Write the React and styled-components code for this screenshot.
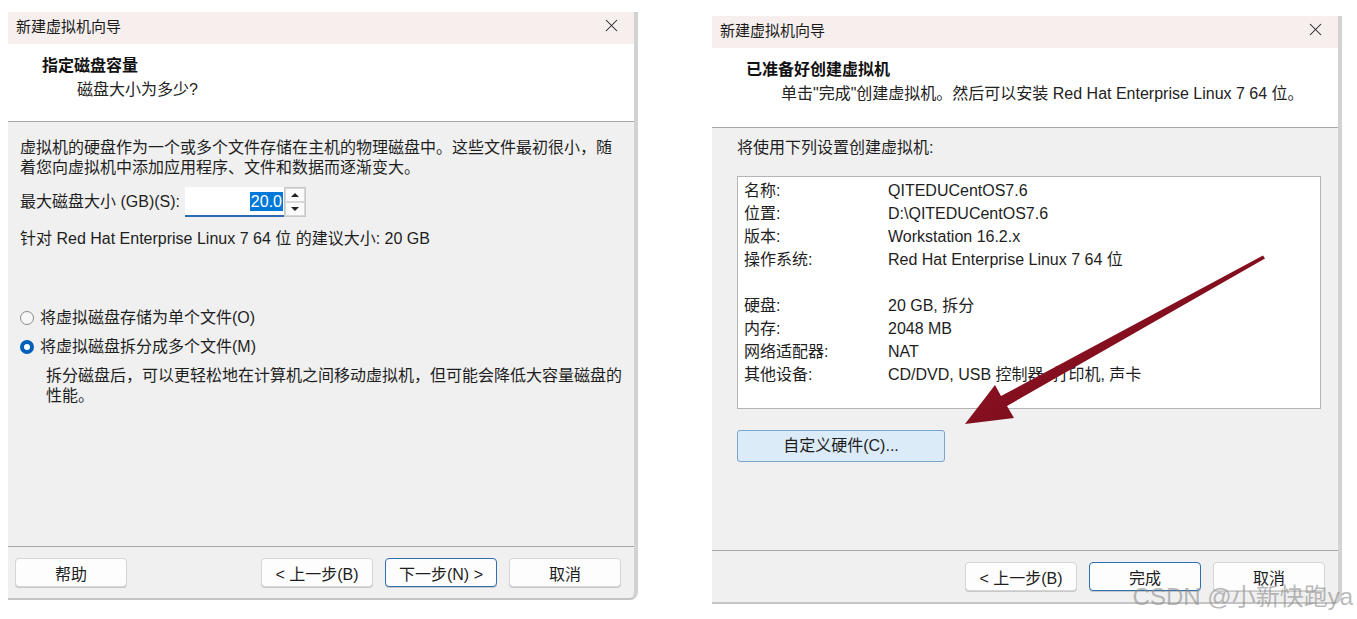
import React from "react";
import styled, { createGlobalStyle } from "styled-components";
import { X } from "lucide-react";

const GlobalStyle = createGlobalStyle`
  body {
    margin: 0;
    background: #ffffff;
    font-family: "Liberation Sans", "Noto Sans CJK SC", sans-serif;
  }
`;

export default function App() {
  return (
    <Page>
      <GlobalStyle />
      <Dialog>
        <TitleBar>
          <TitleText>新建虚拟机向导</TitleText>
          <X size={21} strokeWidth={1.2} color="#222" />
        </TitleBar>
        <Header $height={78}>
          <HeaderTitle>指定磁盘容量</HeaderTitle>
          <HeaderSub>磁盘大小为多少?</HeaderSub>
        </Header>
        <Body $top={16} $left={12} $right={12}>
          <Paragraph>
            虚拟机的硬盘作为一个或多个文件存储在主机的物理磁盘中。这些文件最初很小，随着您向虚拟机中添加应用程序、文件和数据而逐渐变大。
          </Paragraph>
          <SizeRow>
            <span>最大磁盘大小 (GB)(S):</span>
            <SizeInput>
              <Selected>20.0</Selected>
            </SizeInput>
            <Spinner>
              <SpinButton>
                <Tri $up />
              </SpinButton>
              <SpinButton>
                <Tri />
              </SpinButton>
            </Spinner>
          </SizeRow>
          <Paragraph $mt={12}>
            针对 Red Hat Enterprise Linux 7 64 位 的建议大小: 20 GB
          </Paragraph>
          <RadioRow $mt={59}>
            <Radio />
            将虚拟磁盘存储为单个文件(O)
          </RadioRow>
          <RadioRow $mt={9}>
            <Radio $checked />
            将虚拟磁盘拆分成多个文件(M)
          </RadioRow>
          <Paragraph $mt={9} $indent={26}>
            拆分磁盘后，可以更轻松地在计算机之间移动虚拟机，但可能会降低大容量磁盘的性能。
          </Paragraph>
        </Body>
        <Footer>
          <Button>帮助</Button>
          <ButtonGroup>
            <Button>&lt; 上一步(B)</Button>
            <Button $primary>下一步(N) &gt;</Button>
            <Button>取消</Button>
          </ButtonGroup>
        </Footer>
      </Dialog>

      <Dialog $offset={4}>
        <TitleBar>
          <TitleText>新建虚拟机向导</TitleText>
          <X size={21} strokeWidth={1.2} color="#222" />
        </TitleBar>
        <Header $height={80}>
          <HeaderTitle>已准备好创建虚拟机</HeaderTitle>
          <HeaderSub>
            单击"完成"创建虚拟机。然后可以安装 Red Hat Enterprise Linux 7 64 位。
          </HeaderSub>
        </Header>
        <Body $top={10} $left={25} $right={17}>
          <Paragraph>将使用下列设置创建虚拟机:</Paragraph>
          <SummaryBox>
            {summary.map((row, i) => (
              <SummaryRow key={i}>
                <span>{row[0]}</span>
                <span>{row[1]}</span>
              </SummaryRow>
            ))}
          </SummaryBox>
          <CustomButton>自定义硬件(C)...</CustomButton>
        </Body>
        <Footer>
          <span />
          <ButtonGroup>
            <Button>&lt; 上一步(B)</Button>
            <Button $primary>完成</Button>
            <Button>取消</Button>
          </ButtonGroup>
        </Footer>
      </Dialog>

      <Arrow viewBox="0 0 1357 619" width="1357" height="619">
        <defs>
          <linearGradient id="arrowShade" x1="0" y1="0" x2="1" y2="1">
            <stop offset="0" stopColor="#9a1526" />
            <stop offset="1" stopColor="#6e0a17" />
          </linearGradient>
        </defs>
        <polygon
          fill="url(#arrowShade)"
          points="1263,255.5 1265,258.5 1007,406 1014,418 965,424 995,385 1001,396"
        />
      </Arrow>

      <Watermark>CSDN @小新快跑ya</Watermark>
    </Page>
  );
}

const summary = [
  ["名称:", "QITEDUCentOS7.6"],
  ["位置:", "D:\\QITEDUCentOS7.6"],
  ["版本:", "Workstation 16.2.x"],
  ["操作系统:", "Red Hat Enterprise Linux 7 64 位"],
  ["", ""],
  ["硬盘:", "20 GB, 拆分"],
  ["内存:", "2048 MB"],
  ["网络适配器:", "NAT"],
  ["其他设备:", "CD/DVD, USB 控制器, 打印机, 声卡"],
];

const Page = styled.div`
  position: relative;
  display: flex;
  align-items: flex-start;
  gap: 74px;
  width: 1357px;
  height: 619px;
  padding: 12px 0 0 8px;
  box-sizing: border-box;
  overflow: hidden;
  color: #1e1e1e;
  font-size: 16px;
`;

const Dialog = styled.section`
  display: flex;
  flex-direction: column;
  width: 630px;
  height: 588px;
  margin-top: ${(p) => p.$offset || 0}px;
  box-sizing: border-box;
  background: #f0f0f0;
  border-right: 4px solid #d2d2d2;
  border-bottom: 2px solid #c4c4c4;
  border-bottom-right-radius: 8px;
  overflow: hidden;
`;

const TitleBar = styled.header`
  display: flex;
  justify-content: space-between;
  align-items: center;
  height: 32px;
  padding: 0 12px 6px 8px;
  box-sizing: border-box;
  background: #f6efee;
  flex-shrink: 0;
`;

const TitleText = styled.span`
  font-family: "Noto Sans CJK SC", sans-serif;
  font-size: 15px;
  color: #1a1a1a;
`;

const Header = styled.div`
  display: flex;
  flex-direction: column;
  height: ${(p) => p.$height}px;
  padding-top: 12px;
  box-sizing: border-box;
  background: #ffffff;
  border-bottom: 1px solid #a8a8a8;
  flex-shrink: 0;
  line-height: 20px;
`;

const HeaderTitle = styled.div`
  padding-left: 34px;
  font-weight: 700;
  color: #111;
`;

const HeaderSub = styled.div`
  padding-left: 69px;
  margin-top: 4px;
  color: #222;
`;

const Body = styled.div`
  flex: 1;
  display: flex;
  flex-direction: column;
  padding: ${(p) => p.$top}px ${(p) => p.$right}px 0 ${(p) => p.$left}px;
  line-height: 20px;
`;

const Paragraph = styled.p`
  margin: ${(p) => p.$mt || 0}px 0 0;
  padding-left: ${(p) => p.$indent || 0}px;
`;

const SizeRow = styled.div`
  display: flex;
  align-items: center;
  height: 30px;
  margin-top: 9px;

  & > span {
    margin-right: 5px;
  }
`;

const SizeInput = styled.div`
  display: flex;
  align-items: center;
  justify-content: flex-end;
  width: 99px;
  height: 30px;
  box-sizing: border-box;
  padding-right: 1px;
  background: #ffffff;
  border-bottom: 2px solid #2c6bb4;
`;

const Selected = styled.span`
  background: #0078d7;
  color: #ffffff;
  line-height: 19px;
  padding: 0 1px;
`;

const Spinner = styled.div`
  display: flex;
  flex-direction: column;
  width: 22px;
  height: 30px;
  border: 1px solid #c8c8c8;
  box-sizing: border-box;
  background: #e8e8e8;
`;

const SpinButton = styled.div`
  flex: 1;
  display: flex;
  align-items: center;
  justify-content: center;
  background: #fbfbfb;
  border: 1px solid #d8d8d8;
`;

const Tri = styled.span`
  width: 0;
  height: 0;
  border-left: 4px solid transparent;
  border-right: 4px solid transparent;
  ${(p) =>
    p.$up ? "border-bottom: 4px solid #222;" : "border-top: 4px solid #222;"}
`;

const RadioRow = styled.div`
  display: flex;
  align-items: center;
  gap: 6px;
  margin-top: ${(p) => p.$mt}px;
`;

const Radio = styled.span`
  width: 14px;
  height: 14px;
  border-radius: 50%;
  box-sizing: border-box;
  ${(p) =>
    p.$checked
      ? "background: #ffffff; border: 4px solid #005fb8;"
      : "background: #f7f7f7; border: 1px solid #8a8a8a;"}
`;

const Footer = styled.footer`
  display: flex;
  justify-content: space-between;
  align-items: center;
  height: 51px;
  padding: 0 13px 0 7px;
  border-top: 1px solid #a8a8a8;
  flex-shrink: 0;
`;

const ButtonGroup = styled.div`
  display: flex;
  gap: 12px;
`;

const Button = styled.button`
  width: 112px;
  height: 29px;
  padding: 0;
  font: inherit;
  font-size: 16px;
  color: #1e1e1e;
  background: #fdfdfd;
  border: 1px solid ${(p) => (p.$primary ? "#2f6fb0" : "#d6d6d6")};
  border-radius: 4px;
  box-shadow: 0 1px 0 #c8c8c8;
`;

const SummaryBox = styled.div`
  display: flex;
  flex-direction: column;
  height: 233px;
  margin-top: 18px;
  padding-top: 2px;
  box-sizing: border-box;
  background: #ffffff;
  border: 1px solid #b4b4b4;
`;

const SummaryRow = styled.div`
  display: grid;
  grid-template-columns: 144px 1fr;
  height: 23px;
  padding-left: 6px;
  line-height: 23px;
`;

const CustomButton = styled.button`
  align-self: flex-start;
  width: 208px;
  height: 32px;
  margin-top: 21px;
  padding: 0;
  font: inherit;
  font-size: 16px;
  color: #1e1e1e;
  background: #dcebf8;
  border: 1px solid #7aa4cc;
  border-radius: 3px;
`;

const Arrow = styled.svg`
  position: absolute;
  left: 0;
  top: 0;
  pointer-events: none;
`;

const Watermark = styled.div`
  position: absolute;
  right: 4px;
  bottom: 8px;
  font-size: 24px;
  line-height: 28px;
  color: rgba(140, 140, 140, 0.6);
  pointer-events: none;
`;
